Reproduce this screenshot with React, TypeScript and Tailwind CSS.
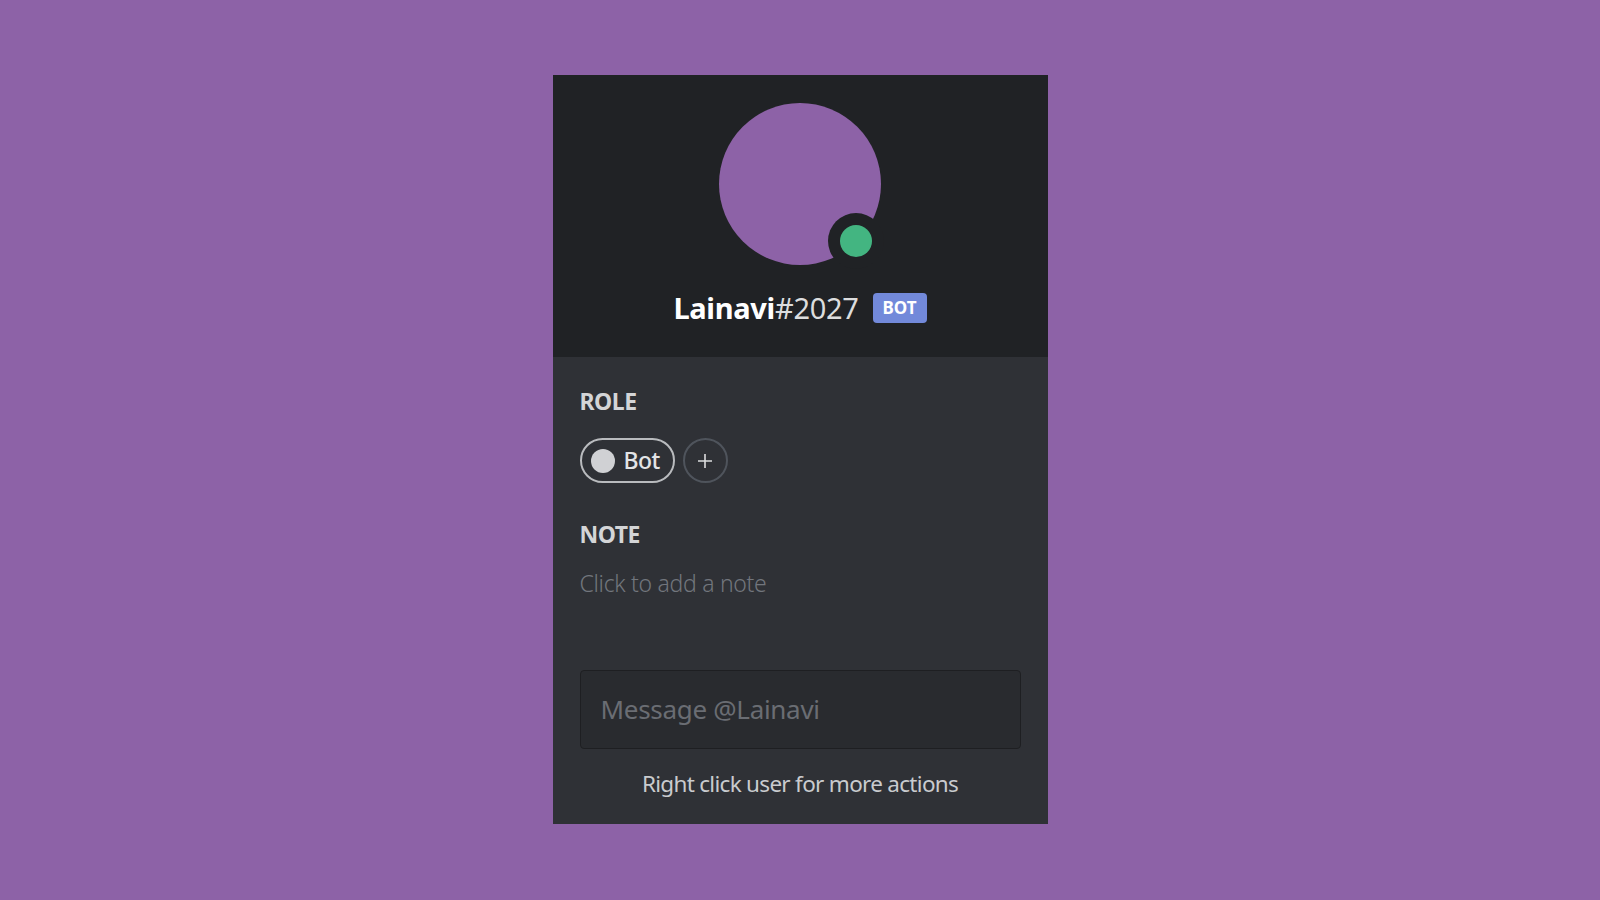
import React from "react";

const font = { fontFamily: '"Noto Sans", "Open Sans", sans-serif' };

const App = () => {
  return (
    <div className="w-full h-[900px] bg-[#8d62a7] flex justify-center pt-[75px]" style={font}>
      <div className="w-[495px] h-[749px] flex flex-col">
        <div className="h-[282px] bg-[#202225] flex flex-col items-center pt-[28px]">
          <div className="relative w-[162px] h-[162px] rounded-full bg-[#8d62a7]">
            <div className="absolute left-[109px] top-[110px] w-[56px] h-[56px] rounded-full bg-[#202225] flex items-center justify-center">
              <div className="w-[32px] h-[32px] rounded-full bg-[#43b581]" />
            </div>
          </div>
          <div className="mt-[26px] flex items-center gap-[14px]">
            <div className="text-[29px] leading-[34px] text-white tracking-[-0.3px]">
              <span className="font-bold">Lainavi</span>
              <span className="text-[#dcddde]">#2027</span>
            </div>
            <span className="h-[30px] w-[54px] rounded-[4px] bg-[#7289da] text-white text-[17px] font-bold flex items-center justify-center">
              BOT
            </span>
          </div>
        </div>

        <div className="flex-1 bg-[#2f3136] px-[27px] pt-[28px] flex flex-col">
          <h3 className="text-[23px] leading-[32px] font-bold text-[#d4d5d7] tracking-[-0.5px]">ROLE</h3>
          <div className="mt-[21px] flex items-center gap-[8px]">
            <div className="h-[45px] w-[95px] rounded-full border-2 border-[#b9bbbe] flex items-center pl-[9px] gap-[9px]">
              <span className="w-[24px] h-[24px] rounded-full bg-[#d0d1d4]" />
              <span className="text-[23px] font-medium text-[#e3e4e6] tracking-[-0.5px]">Bot</span>
            </div>
            <button className="w-[45px] h-[45px] rounded-full border-2 border-[#4f545c] flex items-center justify-center text-[#dcddde]">
              <svg width="16" height="16" viewBox="0 0 16 16" fill="none" stroke="currentColor" strokeWidth="1.6">
                <path d="M8 1v14M1 8h14" />
              </svg>
            </button>
          </div>

          <h3 className="mt-[35px] text-[23px] leading-[32px] font-bold text-[#d4d5d7] tracking-[-0.5px]">NOTE</h3>
          <p className="mt-[17px] text-[23px] leading-[32px] text-[#72767d] font-light tracking-[-0.3px]">Click to add a note</p>

          <div className="mt-[71px] h-[79px] w-[441px] rounded-[4px] bg-[#292b2f] border border-[#1e1f22] flex items-center px-[20px]">
            <span className="text-[26px] text-[#6a6d73] tracking-[-0.3px]">Message @Lainavi</span>
          </div>
          <p className="mt-[19px] text-center text-[22.5px] leading-[32px] text-[#c9cbce] tracking-[-0.7px]">
            Right click user for more actions
          </p>
        </div>
      </div>
    </div>
  );
};

export default App;
